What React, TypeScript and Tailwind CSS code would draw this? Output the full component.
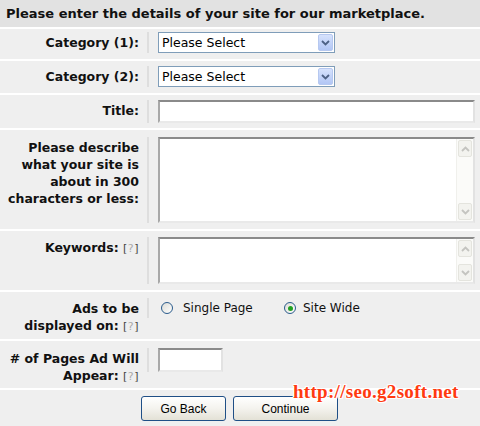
import React from "react";

const font = "font-['DejaVu_Sans',Verdana,sans-serif]";

function Help() {
  return (
    <span className="font-normal text-[#444] text-[11px] tracking-[0.5px]">
      [<span className="text-[#aaa]">?</span>]
    </span>
  );
}

function Chevron({ up, color }: { up?: boolean; color: string }) {
  return (
    <svg width="9" height="6" viewBox="0 0 9 6">
      <path
        d={up ? "M1 5 L4.5 1.5 L8 5" : "M1 1 L4.5 4.5 L8 1"}
        fill="none"
        stroke={color}
        strokeWidth="1.8"
      />
    </svg>
  );
}

function SelectBox() {
  return (
    <div className="relative w-[177px] h-[21px] border border-[#7f9db9] bg-white">
      <div className="h-[19px] pl-[3px] flex items-center text-[12.5px] leading-[15px] text-black">
        <select className="appearance-none w-full bg-transparent outline-none leading-[15px] h-[15px] p-0">
          <option>Please Select</option>
        </select>
      </div>
      <span className="absolute right-[1px] top-[1px] w-[15px] h-[17px] rounded-[2px] border border-[#b6c8f0] bg-gradient-to-b from-[#d6e2fc] to-[#b2c6f5] flex items-center justify-center pointer-events-none">
        <Chevron color="#4d6185" />
      </span>
    </div>
  );
}

function Scrollbar() {
  return (
    <div className="w-[17px] h-full flex flex-col bg-[#fbfbf9] border-l border-[#f0f0ec]">
      <div className="h-[17px] m-[1px] rounded-[2px] border border-[#e4e4de] bg-[#f3f3ef] flex items-center justify-center">
        <Chevron up color="#c4c4c0" />
      </div>
      <div className="flex-1" />
      <div className="h-[17px] m-[1px] rounded-[2px] border border-[#e4e4de] bg-[#f3f3ef] flex items-center justify-center">
        <Chevron color="#c4c4c0" />
      </div>
    </div>
  );
}

const inset =
  "border-2 border-t-[#8a8a8a] border-l-[#a8a8a8] border-r-[#e2e2e2] border-b-[#e9e9e9] bg-white";

function TextArea({ h }: { h: number }) {
  return (
    <div className={`flex w-[317px] ${inset}`} style={{ height: h }}>
      <textarea className="flex-1 resize-none outline-none bg-white" />
      <Scrollbar />
    </div>
  );
}

function Radio({ checked }: { checked?: boolean }) {
  return (
    <span className="w-[12px] h-[12px] rounded-full border border-[#2a5b8c] bg-gradient-to-br from-[#dcdcd6] to-white flex items-center justify-center shrink-0">
      {checked && <span className="w-[5px] h-[5px] rounded-full bg-[#21a121]" />}
    </span>
  );
}

function Row({
  h,
  pt,
  label,
  children,
}: {
  h: number;
  pt: number;
  label: React.ReactNode;
  children: React.ReactNode;
}) {
  return (
    <div className="flex bg-[#efefef]" style={{ height: h, paddingTop: pt }}>
      <div className="w-[147px] pr-[8px] pt-[2px] text-right font-bold text-[12.5px] leading-[17px] text-[#111] whitespace-nowrap">
        {label}
      </div>
      <div className="self-start border-l-2 border-[#dedede] pl-[9px]">
        {children}
      </div>
    </div>
  );
}

export default function App() {
  return (
    <div className={`relative w-[480px] h-[426px] bg-white flex flex-col gap-[2px] overflow-hidden ${font}`}>
      <div className="h-[27px] bg-[#e2e2e2] pl-[6px] flex items-center font-bold text-[13px] text-[#111]">
        Please enter the details of your site for our marketplace.
      </div>
      <Row h={30} pt={3} label="Category (1):">
        <SelectBox />
      </Row>
      <Row h={32} pt={5} label="Category (2):">
        <SelectBox />
      </Row>
      <Row h={33} pt={5} label="Title:">
        <input className={`block w-[317px] h-[23px] outline-none ${inset}`} />
      </Row>
      <Row
        h={99}
        pt={7}
        label={
          <>
            Please describe
            <br />
            what your site is
            <br />
            about in 300
            <br />
            characters or less:
          </>
        }
      >
        <TextArea h={86} />
      </Row>
      <Row
        h={59}
        pt={6}
        label={
          <>
            Keywords: <Help />
          </>
        }
      >
        <TextArea h={47} />
      </Row>
      <Row
        h={47}
        pt={6}
        label={
          <>
            Ads to be
            <br />
            displayed on: <Help />
          </>
        }
      >
        <div className="h-[20px] flex items-center text-[12px] text-[#111]">
          <span className="ml-[3px]">
            <Radio />
          </span>
          <span className="ml-[10px] w-[101px]">Single Page</span>
          <Radio checked />
          <span className="ml-[7px]">Site Wide</span>
        </div>
      </Row>
      <Row
        h={47}
        pt={7}
        label={
          <>
            # of Pages Ad Will
            <br />
            Appear: <Help />
          </>
        }
      >
        <input className={`block w-[65px] h-[24px] outline-none ${inset}`} />
      </Row>
      <div className="flex-1 bg-[#efefef] flex justify-center gap-[7px] pt-[6px] pr-[1px] font-['Liberation_Sans',Arial,sans-serif] text-[12px]">
        <button className="w-[85px] h-[25px] rounded-[3px] border border-[#1f4f86] bg-gradient-to-b from-white via-[#f4f3ee] to-[#e3e1d6] text-black">
          Go Back
        </button>
        <button className="w-[105px] h-[25px] rounded-[3px] border border-[#1f4f86] bg-gradient-to-b from-white via-[#f4f3ee] to-[#e3e1d6] text-black">
          Continue
        </button>
      </div>
      <div className="absolute left-[293px] top-[382px] font-['Liberation_Serif',serif] font-bold text-[19px] leading-[20px] tracking-[0.3px] text-[#ff3a10] [text-shadow:1px_0_0_#fff,-1px_0_0_#fff,0_1px_0_#fff,0_-1px_0_#fff,1px_1px_0_#fff,-1px_-1px_0_#fff,1px_-1px_0_#fff,-1px_1px_0_#fff]">
        http://seo.g2soft.net
      </div>
    </div>
  );
}
